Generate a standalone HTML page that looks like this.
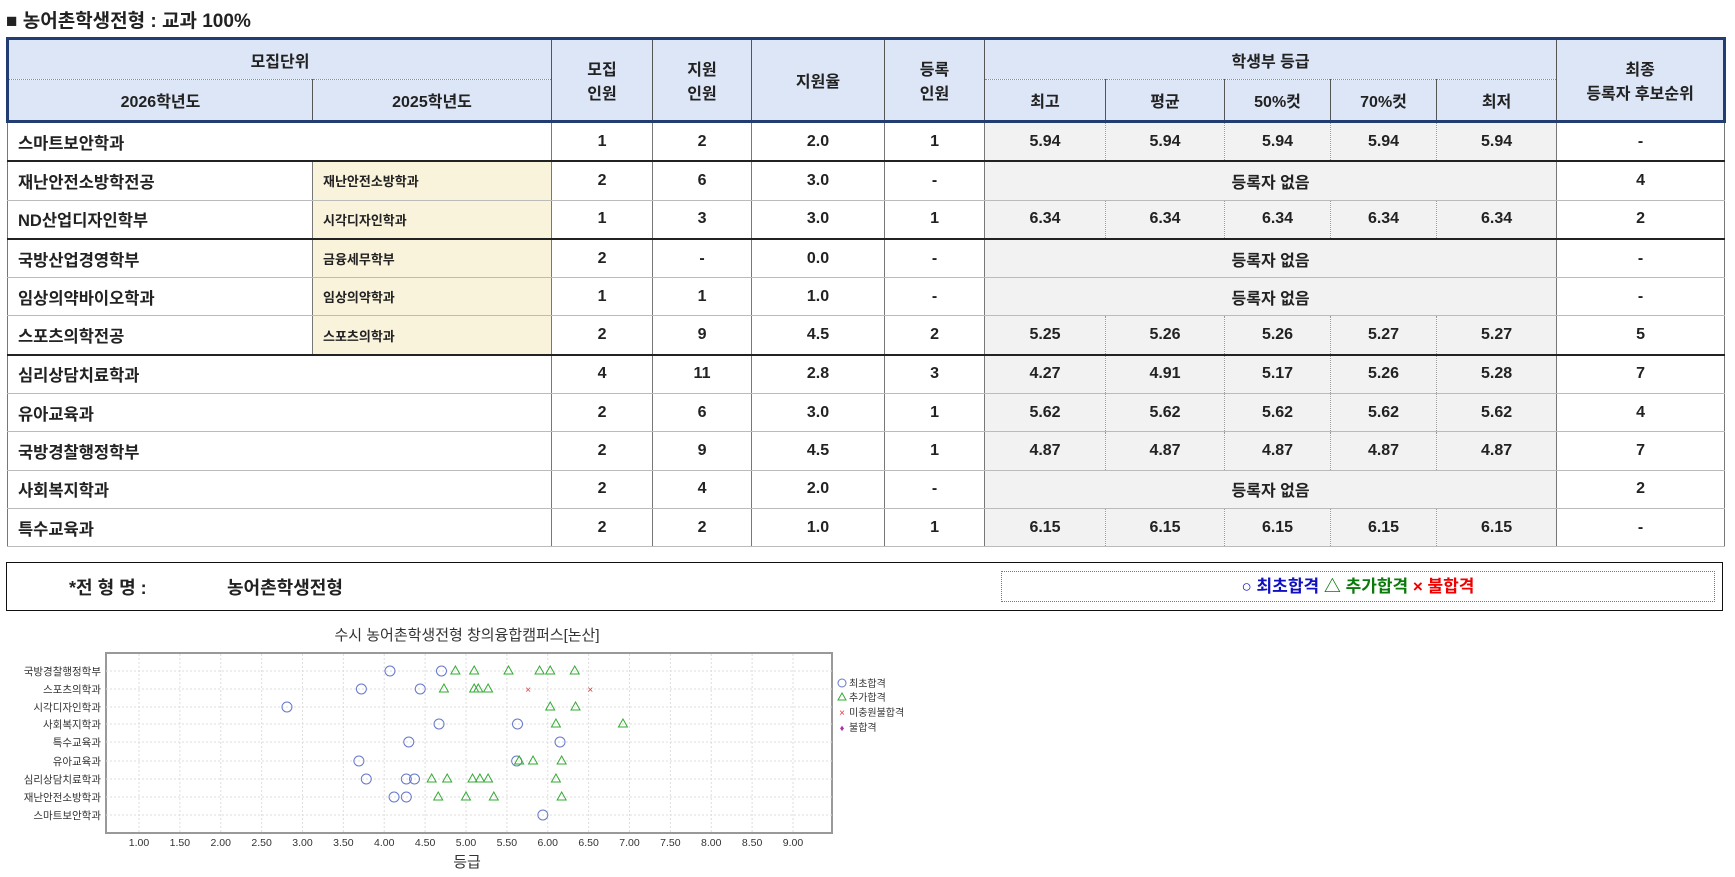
<!DOCTYPE html>
<html><head><meta charset="utf-8"><style>
body{margin:0;width:1735px;height:877px;background:#fff;font-family:"Liberation Sans","Noto Sans CJK KR",sans-serif;color:#222;position:relative;overflow:hidden}
h1{position:absolute;left:6px;top:6px;margin:0;font-size:19px;font-weight:bold;color:#222}
table{position:absolute;left:6px;top:37px;border-collapse:collapse;table-layout:fixed;width:1717px}
td,th{text-align:center;font-size:16px;padding:0;overflow:hidden;white-space:nowrap}
th{background:#dde6f6;font-weight:bold;font-size:16px;color:#222;border-left:1px solid #555;border-right:1px solid #555}
thead tr:first-child th{height:39px}
thead tr:nth-child(2) th{height:40px;border-top:1px dotted #888}
thead{border:3px solid #213d72}
tbody td{height:37.3px;border:1px solid #bbb;font-weight:bold;border-left:1px solid #777;border-right:1px solid #777;vertical-align:middle}
tbody tr.g td{border-top:2px solid #222}
td.n{text-align:left;padding-left:10px;font-weight:600;font-size:16.5px;color:#222}
td.y{background:#faf3dc;text-align:left;padding-left:10px;font-size:13px;font-weight:600;border-left:1px dotted #999}
td.gr{background:#f2f2f2;border-left:1px dotted #999;border-right:1px dotted #999}
td.nx{background:#f2f2f2;font-weight:600}
tbody{border-left:1px solid #111;border-right:1px solid #111;border-bottom:1.5px solid #111}
.box{position:absolute;left:6px;top:562px;width:1715px;height:47px;border:1.5px solid #111}
.box .a{position:absolute;left:62px;top:11px;font-size:18px;font-weight:bold}
.box .b{position:absolute;left:220px;top:11px;font-size:18px;font-weight:bold}
.box .c{position:absolute;left:994px;top:8px;width:712px;height:29px;border:1px dotted #777;text-align:center;font-size:17px;font-weight:bold;line-height:29px}
</style></head><body>
<h1>■ 농어촌학생전형 : 교과 100%</h1>
<table>
<colgroup><col style="width:305px"><col style="width:239px"><col style="width:101px"><col style="width:99px"><col style="width:133px"><col style="width:100px"><col style="width:121px"><col style="width:119px"><col style="width:106px"><col style="width:106px"><col style="width:120px"><col style="width:168px"></colgroup>
<thead>
<tr><th colspan="2">모집단위</th><th rowspan="2">모집<br>인원</th><th rowspan="2">지원<br>인원</th><th rowspan="2">지원율</th><th rowspan="2">등록<br>인원</th><th colspan="5">학생부 등급</th><th rowspan="2">최종<br>등록자 후보순위</th></tr>
<tr><th>2026학년도</th><th style="border-left:1px dotted #888">2025학년도</th><th>최고</th><th>평균</th><th>50%컷</th><th>70%컷</th><th>최저</th></tr>
</thead>
<tbody>
<tr><td class="n" colspan="2">스마트보안학과</td><td>1</td><td>2</td><td>2.0</td><td>1</td><td class="gr">5.94</td><td class="gr">5.94</td><td class="gr">5.94</td><td class="gr">5.94</td><td class="gr">5.94</td><td>-</td></tr>
<tr class="g"><td class="n">재난안전소방학전공</td><td class="y">재난안전소방학과</td><td>2</td><td>6</td><td>3.0</td><td>-</td><td colspan="5" class="nx">등록자 없음</td><td>4</td></tr>
<tr><td class="n">ND산업디자인학부</td><td class="y">시각디자인학과</td><td>1</td><td>3</td><td>3.0</td><td>1</td><td class="gr">6.34</td><td class="gr">6.34</td><td class="gr">6.34</td><td class="gr">6.34</td><td class="gr">6.34</td><td>2</td></tr>
<tr class="g"><td class="n">국방산업경영학부</td><td class="y">금융세무학부</td><td>2</td><td>-</td><td>0.0</td><td>-</td><td colspan="5" class="nx">등록자 없음</td><td>-</td></tr>
<tr><td class="n">임상의약바이오학과</td><td class="y">임상의약학과</td><td>1</td><td>1</td><td>1.0</td><td>-</td><td colspan="5" class="nx">등록자 없음</td><td>-</td></tr>
<tr><td class="n">스포츠의학전공</td><td class="y">스포츠의학과</td><td>2</td><td>9</td><td>4.5</td><td>2</td><td class="gr">5.25</td><td class="gr">5.26</td><td class="gr">5.26</td><td class="gr">5.27</td><td class="gr">5.27</td><td>5</td></tr>
<tr class="g"><td class="n" colspan="2">심리상담치료학과</td><td>4</td><td>11</td><td>2.8</td><td>3</td><td class="gr">4.27</td><td class="gr">4.91</td><td class="gr">5.17</td><td class="gr">5.26</td><td class="gr">5.28</td><td>7</td></tr>
<tr><td class="n" colspan="2">유아교육과</td><td>2</td><td>6</td><td>3.0</td><td>1</td><td class="gr">5.62</td><td class="gr">5.62</td><td class="gr">5.62</td><td class="gr">5.62</td><td class="gr">5.62</td><td>4</td></tr>
<tr><td class="n" colspan="2">국방경찰행정학부</td><td>2</td><td>9</td><td>4.5</td><td>1</td><td class="gr">4.87</td><td class="gr">4.87</td><td class="gr">4.87</td><td class="gr">4.87</td><td class="gr">4.87</td><td>7</td></tr>
<tr><td class="n" colspan="2">사회복지학과</td><td>2</td><td>4</td><td>2.0</td><td>-</td><td colspan="5" class="nx">등록자 없음</td><td>2</td></tr>
<tr><td class="n" colspan="2">특수교육과</td><td>2</td><td>2</td><td>1.0</td><td>1</td><td class="gr">6.15</td><td class="gr">6.15</td><td class="gr">6.15</td><td class="gr">6.15</td><td class="gr">6.15</td><td>-</td></tr>
</tbody></table>
<div class="box"><span class="a">*전 형 명 :</span><span class="b">농어촌학생전형</span>
<div class="c"><span style="color:#1010c0">○ 최초합격</span> <span style="color:#0a7a0a">△ 추가합격</span> <span style="color:#e00">× 불합격</span></div></div>
<svg id="ch" style="position:absolute;left:0;top:617px" width="930" height="260" viewBox="0 620 930 260" font-family="Liberation Sans,Noto Sans CJK KR,sans-serif"></svg>
<script>
const s=document.getElementById('ch');let h='';
const X=v=>139+(v-1)*81.75;
h+='<text x="467" y="643" font-size="15" text-anchor="middle" fill="#333">수시 농어촌학생전형 창의융합캠퍼스[논산]</text>';
h+='<rect x="106" y="656" width="726" height="180" fill="#fff" stroke="#999" stroke-width="2"/>';
for(let v=1;v<=9.001;v+=0.5){h+=`<line x1="${X(v)}" y1="657" x2="${X(v)}" y2="835" stroke="#ddd" stroke-dasharray="2,2"/><text x="${X(v)}" y="849" font-size="10.5" text-anchor="middle" fill="#333">${v.toFixed(2)}</text>`;}
const rows=[['국방경찰행정학부',[4.07,4.70],[4.87,5.10,5.52,5.90,6.03,6.33],[]],['스포츠의학과',[3.72,4.44],[4.73,5.10,5.15,5.27],[5.76,6.52]],['시각디자인학과',[2.81],[6.03,6.34],[]],['사회복지학과',[4.67,5.63],[6.10,6.92],[]],['특수교육과',[4.30,6.15],[],[]],['유아교육과',[3.69,5.62],[5.65,5.82,6.17],[]],['심리상담치료학과',[3.78,4.27,4.37],[4.58,4.77,5.08,5.17,5.27,6.10],[]],['재난안전소방학과',[4.12,4.27],[4.66,5.00,5.34,6.17],[]],['스마트보안학과',[5.94],[],[]]];
const ys=[674,692,710,727,745,764,782,800,818];
rows.forEach((r,i)=>{const y=ys[i];h+=`<line x1="106" y1="${y}" x2="832" y2="${y}" stroke="#ddd" stroke-dasharray="2,2"/><text x="101" y="${y+4}" font-size="10.5" text-anchor="end" fill="#333">${r[0]}</text>`;
r[1].forEach(v=>h+=`<circle cx="${X(v)}" cy="${y}" r="5" fill="none" stroke="#6677cc"/>`);
r[2].forEach(v=>h+=`<path d="M${X(v)} ${y-5}L${X(v)+4.5} ${y+3}L${X(v)-4.5} ${y+3}Z" fill="none" stroke="#3a3"/>`);
r[3].forEach(v=>h+=`<text x="${X(v)}" y="${y+4}" font-size="10" text-anchor="middle" fill="#e33">×</text>`);});
h+='<text x="467" y="870" font-size="15" text-anchor="middle" fill="#333">등급</text>';
h+='<circle cx="842" cy="686" r="4" fill="none" stroke="#6677cc"/><text x="849" y="690" font-size="10" fill="#333">최초합격</text>';
h+='<path d="M842 696L846 703L838 703Z" fill="none" stroke="#3a3"/><text x="849" y="704" font-size="10" fill="#333">추가합격</text>';
h+='<text x="842" y="719" font-size="10" text-anchor="middle" fill="#e33">×</text><text x="849" y="719" font-size="10" fill="#333">미충원불합격</text>';
h+='<text x="842" y="734" font-size="9" text-anchor="middle" fill="#a3a">♦</text><text x="849" y="734" font-size="10" fill="#333">불합격</text>';
s.innerHTML=h;
</script>
</body></html>
